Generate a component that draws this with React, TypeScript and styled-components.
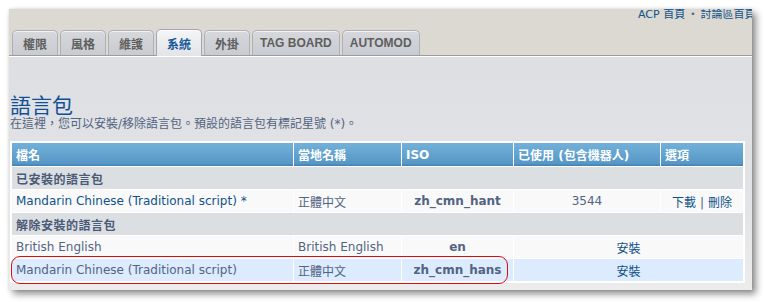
import React from 'react';
import styled, { createGlobalStyle } from 'styled-components';

const Global = createGlobalStyle`
  html, body { margin: 0; padding: 0; background: #ffffff; }
  body { font-family: "DejaVu Sans", "Noto Sans CJK TC", sans-serif; }
`;

const Page = styled.div`
  width: 766px;
  height: 302px;
  box-sizing: border-box;
  padding: 9px 0 0 9px;
`;

const Window = styled.div`
  width: 743px;
  height: 281px;
  display: flex;
  flex-direction: column;
  overflow: hidden;
  box-shadow: 4px 4px 7px rgba(0, 0, 0, 0.45), 0 0 3px rgba(0, 0, 0, 0.12);
  background: #eeeeee;
`;

const Header = styled.div`
  height: 46px;
  display: flex;
  flex-direction: column;
  justify-content: space-between;
  background: #dcd9d3;
  border-bottom: 1px solid #9c9c9c;
`;

const TopLinks = styled.div`
  display: flex;
  align-items: center;
  gap: 5px;
  padding-left: 629px;
  margin-top: -1px;
  height: 13px;
  white-space: nowrap;
  font-size: 11px;
  line-height: 13px;
  color: #105289;
`;

const Bullet = styled.span`
  color: #536482;
  font-size: 9px;
`;

const Tabs = styled.div`
  display: flex;
  align-items: flex-end;
  height: 26px;
  padding-left: 2px;
  margin-bottom: -1px;
`;

const Tab = styled.div<{ $active?: boolean }>`
  position: relative;
  box-sizing: border-box;
  min-width: 46px;
  margin: 0 1px;
  padding: 0 7px;
  height: ${(p) => (p.$active ? '27px' : '25px')};
  margin-bottom: ${(p) => (p.$active ? '0' : '1px')};
  display: flex;
  align-items: center;
  justify-content: center;
  border: 1px solid ${(p) => (p.$active ? '#a3a7ad' : '#adb0b6')};
  border-bottom: none;
  border-radius: 5px 5px 0 0;
  background: ${(p) =>
    p.$active
      ? 'linear-gradient(#f4f5f6, #e2e4e7)'
      : 'linear-gradient(#d6d8dc, #c8cbd0)'};
  box-shadow: inset 0 1px 0 rgba(255, 255, 255, 0.7);
  font-family: "Liberation Sans", "Noto Sans CJK TC", sans-serif;
  font-weight: bold;
  font-size: 12px;
  color: ${(p) => (p.$active ? '#1b5a9a' : '#5e5e5e')};
  white-space: nowrap;
`;

const Content = styled.div`
  flex: 1;
  border-top: 1px solid #ffffff;
  background: linear-gradient(#dddfe2, #e2e3e6 60%, #ececec);
  padding: 35px 7px 0 1px;
`;

const Title = styled.h1`
  margin: 0;
  font-family: "Noto Sans CJK TC", sans-serif;
  font-weight: 400;
  font-size: 21px;
  line-height: 24px;
  color: #115098;
`;

const Desc = styled.p`
  margin: 1px 0 0;
  font-size: 12px;
  line-height: 14px;
  color: #536482;
  white-space: nowrap;
`;

const TableWrap = styled.div`
  position: relative;
  margin-top: 10px;
`;

const Table = styled.table`
  border-collapse: separate;
  border-spacing: 1px;
  border: 1px solid #ffffff;
  background: #ffffff;
  table-layout: fixed;
  font-size: 12px;
  color: #536482;
`;

const Th = styled.th<{ $w: number }>`
  width: ${(p) => p.$w}px;
  height: 23px;
  box-sizing: border-box;
  padding: 0 4px;
  text-align: left;
  font-weight: bold;
  color: #ffffff;
  background: linear-gradient(#71b1d9, #5797c6 90%, #3f7fb0);
  white-space: nowrap;
`;

const SectionCell = styled.td`
  height: 22px;
  padding: 0 4px;
  background: #dcdfe2;
  font-weight: bold;
  color: #4a5a78;
  letter-spacing: 0.5px;
`;

const Td = styled.td<{ $alt?: boolean; $align?: string; $bold?: boolean }>`
  height: 22px;
  padding: 0 4px;
  background: ${(p) => (p.$alt ? '#dcebfe' : '#f9f9f9')};
  text-align: ${(p) => p.$align || 'left'};
  font-weight: ${(p) => (p.$bold ? 'bold' : 'normal')};
  white-space: nowrap;
`;

const Link = styled.a`
  color: #105289;
  text-decoration: none;
`;

const Sep = styled.span`
  margin: 0 4px;
  color: #536482;
`;

const Annotation = styled.div`
  position: absolute;
  left: 1px;
  top: 115px;
  width: 497px;
  height: 28px;
  box-sizing: border-box;
  border: 1px solid #e00b0b;
  border-radius: 9px;
  pointer-events: none;
`;

const tabs = ['權限', '風格', '維護', '系統', '外掛', 'TAG BOARD', 'AUTOMOD'];

export default function App() {
  return (
    <Page>
      <Global />
      <Window>
        <Header>
          <TopLinks>
            <Link href="#">ACP 首頁</Link>
            <Bullet>•</Bullet>
            <Link href="#">討論區首頁</Link>
          </TopLinks>
          <Tabs>
            {tabs.map((t) => (
              <Tab key={t} $active={t === '系統'}>
                {t}
              </Tab>
            ))}
          </Tabs>
        </Header>
        <Content>
          <Title>語言包</Title>
          <Desc>在這裡，您可以安裝/移除語言包。預設的語言包有標記星號 (*)。</Desc>
          <TableWrap>
            <Table>
              <thead>
                <tr>
                  <Th $w={281}>檔名</Th>
                  <Th $w={107}>當地名稱</Th>
                  <Th $w={111}>ISO</Th>
                  <Th $w={146}>已使用 (包含機器人)</Th>
                  <Th $w={82}>選項</Th>
                </tr>
              </thead>
              <tbody>
                <tr>
                  <SectionCell colSpan={5}>已安裝的語言包</SectionCell>
                </tr>
                <tr>
                  <Td>
                    <Link href="#">Mandarin Chinese (Traditional script) *</Link>
                  </Td>
                  <Td>正體中文</Td>
                  <Td $align="center" $bold>zh_cmn_hant</Td>
                  <Td $align="center">3544</Td>
                  <Td $align="center">
                    <Link href="#">下載</Link>
                    <Sep>|</Sep>
                    <Link href="#">刪除</Link>
                  </Td>
                </tr>
                <tr>
                  <SectionCell colSpan={5}>解除安裝的語言包</SectionCell>
                </tr>
                <tr>
                  <Td>British English</Td>
                  <Td>British English</Td>
                  <Td $align="center" $bold>en</Td>
                  <Td $align="center" colSpan={2}>
                    <Link href="#">安裝</Link>
                  </Td>
                </tr>
                <tr>
                  <Td $alt>Mandarin Chinese (Traditional script)</Td>
                  <Td $alt>正體中文</Td>
                  <Td $alt $align="center" $bold>zh_cmn_hans</Td>
                  <Td $alt $align="center" colSpan={2}>
                    <Link href="#">安裝</Link>
                  </Td>
                </tr>
              </tbody>
            </Table>
            <Annotation />
          </TableWrap>
        </Content>
      </Window>
    </Page>
  );
}
